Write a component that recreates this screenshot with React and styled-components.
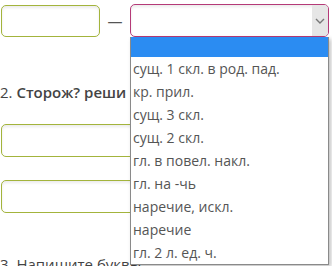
import React from "react";
import styled, { createGlobalStyle } from "styled-components";

const GlobalStyle = createGlobalStyle`
  html, body {
    margin: 0;
    padding: 0;
    background: #ffffff;
    overflow: hidden;
  }
  body {
    font-family: "Open Sans", "Liberation Sans", sans-serif;
    color: #444444;
  }
`;

const options = [
  "",
  "сущ. 1 скл. в род. пад.",
  "кр. прил.",
  "сущ. 3 скл.",
  "сущ. 2 скл.",
  "гл. в повел. накл.",
  "гл. на -чь",
  "наречие, искл.",
  "наречие",
  "гл. 2 л. ед. ч.",
];

const App = () => {
  return (
    <Page>
      <GlobalStyle />
      <Row>
        <TextBox />
        <Dash>—</Dash>
        <SelectWrap>
          <SelectBox>
            <Arrow>
              <svg width="10" height="6" viewBox="0 0 10 6">
                <path d="M1 1l4 4 4-4" fill="none" stroke="#777" strokeWidth="1.4" />
              </svg>
            </Arrow>
          </SelectBox>
          <Dropdown>
            {options.map((o, i) => (
              <Option key={i} $active={i === 0}>
                {o}
              </Option>
            ))}
          </Dropdown>
        </SelectWrap>
      </Row>
      <Question>
        2. <b>Сторож? реши</b>
      </Question>
      <WideBox $gap="22px" />
      <WideBox $gap="23px" />
      <Question $next>3. Напишите буквы</Question>
    </Page>
  );
};

export default App;

const Page = styled.div`
  padding: 4px 0 0 1px;
  width: 332px;
  height: 266px;
  box-sizing: border-box;
`;

const Row = styled.div`
  display: flex;
  align-items: center;
`;

const TextBox = styled.div`
  width: 99px;
  height: 32px;
  box-sizing: border-box;
  border: 1px solid #a3b43c;
  border-radius: 5px;
  box-shadow: inset 0 2px 3px rgba(0, 0, 0, 0.08);
  background: #fff;
`;

const Dash = styled.span`
  width: 30px;
  text-align: center;
  font-size: 15px;
  color: #555;
`;

const SelectWrap = styled.div`
  position: relative;
`;

const SelectBox = styled.div`
  width: 199px;
  height: 33px;
  box-sizing: border-box;
  border: 1px solid #b53a78;
  border-radius: 5px;
  background: #fff;
  box-shadow: inset 0 2px 3px rgba(0, 0, 0, 0.08);
  display: flex;
  justify-content: flex-end;
  overflow: hidden;
`;

const Arrow = styled.div`
  width: 16px;
  background: #e6e6e6;
  display: flex;
  align-items: center;
  justify-content: center;
`;

const Dropdown = styled.div`
  position: absolute;
  top: 33px;
  left: 0;
  width: 199px;
  box-sizing: border-box;
  background: #fff;
  border: 1px solid #8a8a8a;
  border-top: none;
  box-shadow: 2px 2px 4px rgba(0, 0, 0, 0.25);
  z-index: 5;
`;

const Option = styled.div`
  height: ${(p) => (p.$active ? "20px" : "23px")};
  line-height: 23px;
  padding-left: 2px;
  font-size: 14px;
  color: #555555;
  background: ${(p) => (p.$active ? "#2b8cf2" : "#fff")};
  white-space: nowrap;
`;

const Question = styled.div`
  margin: ${(p) => (p.$next ? "41px 0 0 -1px" : "45px 0 0 -1px")};
  font-size: 15px;
  color: #444;
  white-space: nowrap;
  b {
    font-weight: 600;
  }
`;

const WideBox = styled.div`
  width: 300px;
  height: 33px;
  box-sizing: border-box;
  border: 1px solid #a3b43c;
  border-radius: 5px;
  box-shadow: inset 0 2px 3px rgba(0, 0, 0, 0.08);
  margin-top: ${(p) => p.$gap};
`;
